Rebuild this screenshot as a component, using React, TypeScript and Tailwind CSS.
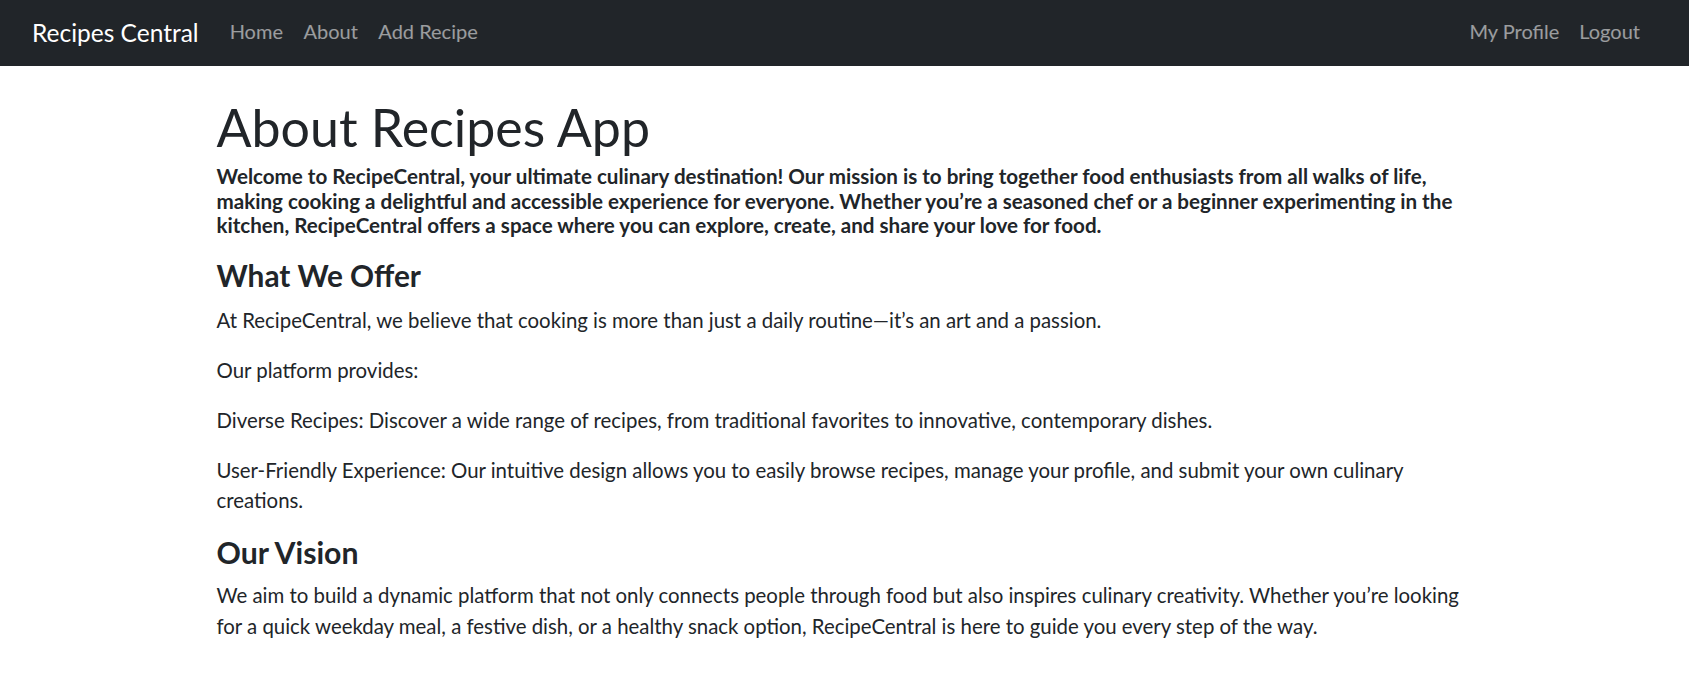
const leftLinks = ['Home', 'About', 'Add Recipe'];
const rightLinks = ['My Profile', 'Logout'];

function NavBar() {
  return (
    <nav className="h-[66px] bg-[#212529] flex items-center pl-8 pr-[49px]">
      <a href="#" className="text-white text-[24.5px] leading-none mr-[31px] whitespace-nowrap">
        Recipes Central
      </a>
      <ul className="flex items-center gap-[20.5px]">
        {leftLinks.map((l) => (
          <li key={l}>
            <a href="#" className="text-white/55 text-[20px] leading-none whitespace-nowrap">
              {l}
            </a>
          </li>
        ))}
      </ul>
      <ul className="ml-auto flex items-center gap-[20px]">
        {rightLinks.map((l) => (
          <li key={l}>
            <a href="#" className="text-white/55 text-[20px] leading-none whitespace-nowrap">
              {l}
            </a>
          </li>
        ))}
      </ul>
    </nav>
  );
}

export default function App() {
  return (
    <div className="min-h-screen bg-white font-['Lato',sans-serif] text-[#212529]">
      <NavBar />
      <main className="max-w-[1320px] mx-auto px-8 pt-[30px]">
        <h1 className="text-[51.9px] leading-[62px] font-normal">About Recipes App</h1>
        <p className="mt-[6px] text-[20.6px] leading-[24.5px] font-bold">
          Welcome to RecipeCentral, your ultimate culinary destination! Our mission is to bring together food
          enthusiasts from all walks of life, making cooking a delightful and accessible experience for everyone.
          Whether you’re a seasoned chef or a beginner experimenting in the kitchen, RecipeCentral offers a space
          where you can explore, create, and share your love for food.
        </p>

        <h2 className="mt-[21px] text-[29.8px] leading-[34px] font-bold">What We Offer</h2>
        <div className="mt-[12px] text-[20.4px] leading-[30px] flex flex-col gap-[20px]">
          <p>At RecipeCentral, we believe that cooking is more than just a daily routine—it’s an art and a passion.</p>
          <p>Our platform provides:</p>
          <p>
            Diverse Recipes: Discover a wide range of recipes, from traditional favorites to innovative, contemporary
            dishes.
          </p>
          <p>
            User-Friendly Experience: Our intuitive design allows you to easily browse recipes, manage your profile,
            and submit your own culinary creations.
          </p>
        </div>

        <h2 className="mt-[20px] text-[30.2px] leading-[34px] font-bold">Our Vision</h2>
        <p className="mt-[11px] text-[20.4px] leading-[31px]">
          We aim to build a dynamic platform that not only connects people through food but also inspires culinary
          creativity. Whether you’re looking for a quick weekday meal, a festive dish, or a healthy snack option,
          RecipeCentral is here to guide you every step of the way.
        </p>
      </main>
    </div>
  );
}
